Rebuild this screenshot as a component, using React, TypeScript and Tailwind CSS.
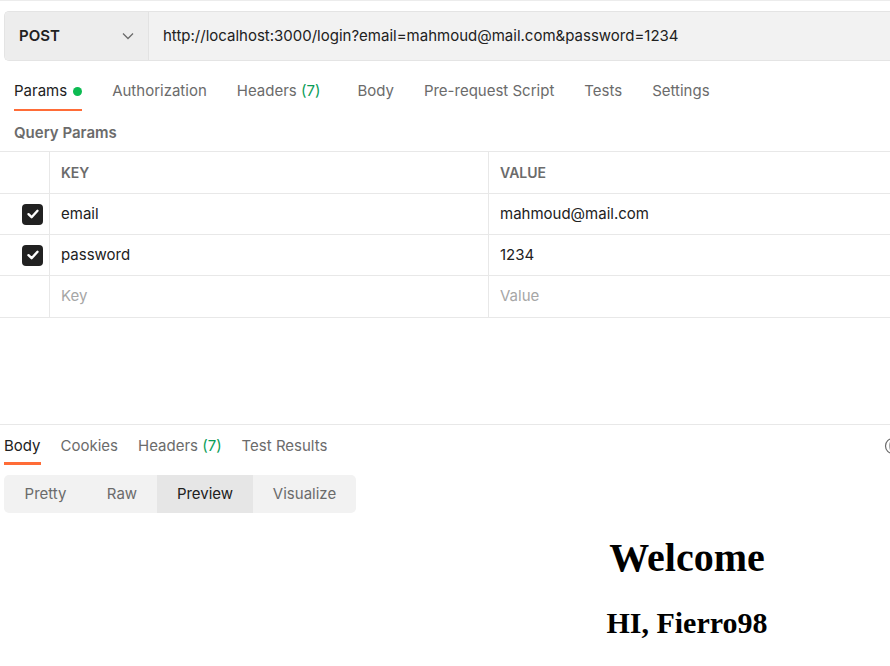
import React from "react";

function Check() {
  return (
    <div className="w-[21px] h-[21px] rounded-[4px] bg-[#212121] flex items-center justify-center">
      <svg width="14" height="14" viewBox="0 0 14 14" fill="none">
        <path d="M2.5 7.2 L5.6 10.2 L11.5 3.8" stroke="white" strokeWidth="2.4" strokeLinecap="round" strokeLinejoin="round" />
      </svg>
    </div>
  );
}

export default function App() {
  const tabs = [
    { t: "Params", dot: true, active: true },
    { t: "Authorization" },
    { t: "Headers", n: "(7)", extra: true },
    { t: "Body" },
    { t: "Pre-request Script" },
    { t: "Tests" },
    { t: "Settings" },
  ];
  return (
    <div
      className="w-[890px] h-[666px] overflow-hidden bg-white text-[#212121] relative"
      style={{ fontFamily: "Inter, 'Noto Sans', sans-serif" }}
    >
      <div className="border-t border-[#ececec]" />
      {/* URL bar */}
      <div className="mt-[10px] ml-[4px] w-[900px] h-[50px] flex rounded-l-[5px] border border-r-0 border-[#e4e4e4] bg-[#f2f2f2] overflow-hidden">
        <div className="w-[144px] shrink-0 bg-[#ededed] border-r border-[#e2e2e2] flex items-center justify-between pl-[14px] pr-[14px]">
          <span className="text-[15px] font-semibold text-[#212121]">POST</span>
          <svg width="12" height="8" viewBox="0 0 12 8" fill="none">
            <path d="M1 1.5 L6 6.5 L11 1.5" stroke="#6b6b6b" strokeWidth="1.3" />
          </svg>
        </div>
        <div className="flex items-center pl-[14px] text-[15px] text-[#212121]">
          http://localhost:3000/login?email=mahmoud@mail.com&amp;password=1234
        </div>
      </div>

      {/* Request tabs */}
      <div className="flex ml-[14px] mt-[14px] h-[36px] gap-[30px]">
        {tabs.map((x) => (
          <div key={x.t} className={`relative flex items-start pt-[5px] ${x.extra ? "pr-[7px]" : ""}`}>
            <span className={`text-[15px] ${x.active ? "text-[#212121]" : "text-[#6b6b6b]"}`}>
              {x.t}
              {x.n ? <span className="text-[#0a9d58]"> {x.n}</span> : null}
            </span>
            {x.dot ? <span className="ml-[6px] mt-[7px] w-[9px] h-[9px] rounded-full bg-[#0cbb52]" /> : null}
            {x.active ? <div className="absolute left-0 right-0 bottom-[0px] h-[2px] bg-[#ff6c37]" /> : null}
          </div>
        ))}
      </div>

      {/* Query Params */}
      <div className="ml-[14px] mt-[12px] text-[15px] font-semibold text-[#6b6b6b] h-[20px] leading-[20px]">Query Params</div>

      <div className="mt-[8px] border-t border-[#e8e8e8]">
        <div className="flex h-[42px] border-b border-[#e8e8e8]">
          <div className="w-[50px] shrink-0 border-r border-[#e8e8e8]" />
          <div className="w-[439px] shrink-0 border-r border-[#e8e8e8] flex items-center pl-[11px] text-[14px] font-semibold text-[#6b6b6b]">KEY</div>
          <div className="flex-1 flex items-center pl-[11px] text-[14px] font-semibold text-[#6b6b6b]">VALUE</div>
        </div>
        {[
          ["email", "mahmoud@mail.com"],
          ["password", "1234"],
        ].map(([k, v]) => (
          <div key={k} className="flex h-[41px] border-b border-[#e8e8e8]">
            <div className="w-[50px] shrink-0 border-r border-[#e8e8e8] flex items-center justify-end pr-[6px]">
              <Check />
            </div>
            <div className="w-[439px] shrink-0 border-r border-[#e8e8e8] flex items-center pl-[11px] text-[15px] text-[#212121]">{k}</div>
            <div className="flex-1 flex items-center pl-[11px] text-[15px] text-[#212121]">{v}</div>
          </div>
        ))}
        <div className="flex h-[42px] border-b border-[#e8e8e8]">
          <div className="w-[50px] shrink-0 border-r border-[#e8e8e8]" />
          <div className="w-[439px] shrink-0 border-r border-[#e8e8e8] flex items-center pl-[11px] pb-[1px] text-[15px] text-[#a6a6a6]">Key</div>
          <div className="flex-1 flex items-center pl-[11px] pb-[1px] text-[15px] text-[#a6a6a6]">Value</div>
        </div>
      </div>

      {/* Response */}
      <div className="mt-[106px] border-t border-[#e8e8e8] relative">
        <div className="flex ml-[4px] h-[40px] gap-[20px]">
          {[
            { t: "Body", active: true },
            { t: "Cookies" },
            { t: "Headers", n: "(7)" },
            { t: "Test Results" },
          ].map((x) => (
            <div key={x.t} className="relative pt-[8px]">
              <span className={`text-[15px] ${x.active ? "text-[#212121]" : "text-[#6b6b6b]"}`}>
                {x.t}
                {x.n ? <span className="text-[#0a9d58]"> {x.n}</span> : null}
              </span>
              {x.active ? <div className="absolute left-0 right-0 bottom-0 h-[3px] bg-[#ff6c37]" /> : null}
            </div>
          ))}
        </div>
        <div className="absolute left-[884px] top-[12px]">
          <svg width="18" height="18" viewBox="0 0 18 18" fill="none">
            <circle cx="9" cy="9" r="7.5" stroke="#6b6b6b" strokeWidth="1.2" />
            <ellipse cx="9" cy="9" rx="3" ry="7.5" stroke="#6b6b6b" strokeWidth="1.2" />
          </svg>
        </div>

        <div className="ml-[4px] mt-[10px] w-[352px] h-[38px] bg-[#f2f2f2] rounded-[5px] flex overflow-hidden text-[15px]">
          <div className="w-[83px] flex items-center justify-center text-[#6b6b6b]">Pretty</div>
          <div className="w-[70px] flex items-center justify-center text-[#6b6b6b]">Raw</div>
          <div className="w-[96px] flex items-center justify-center bg-[#e6e6e6] text-[#212121]">Preview</div>
          <div className="w-[103px] flex items-center justify-center text-[#6b6b6b]">Visualize</div>
        </div>

        <div className="ml-[4px] w-[1366px] text-center text-black" style={{ fontFamily: "'Liberation Serif', 'Times New Roman', serif" }}>
          <div className="mt-[22px] text-[40px] font-bold leading-[46px]">Welcome</div>
          <div className="mt-[24px] text-[30px] font-bold leading-[36px]">HI, Fierro98</div>
        </div>
      </div>
    </div>
  );
}
